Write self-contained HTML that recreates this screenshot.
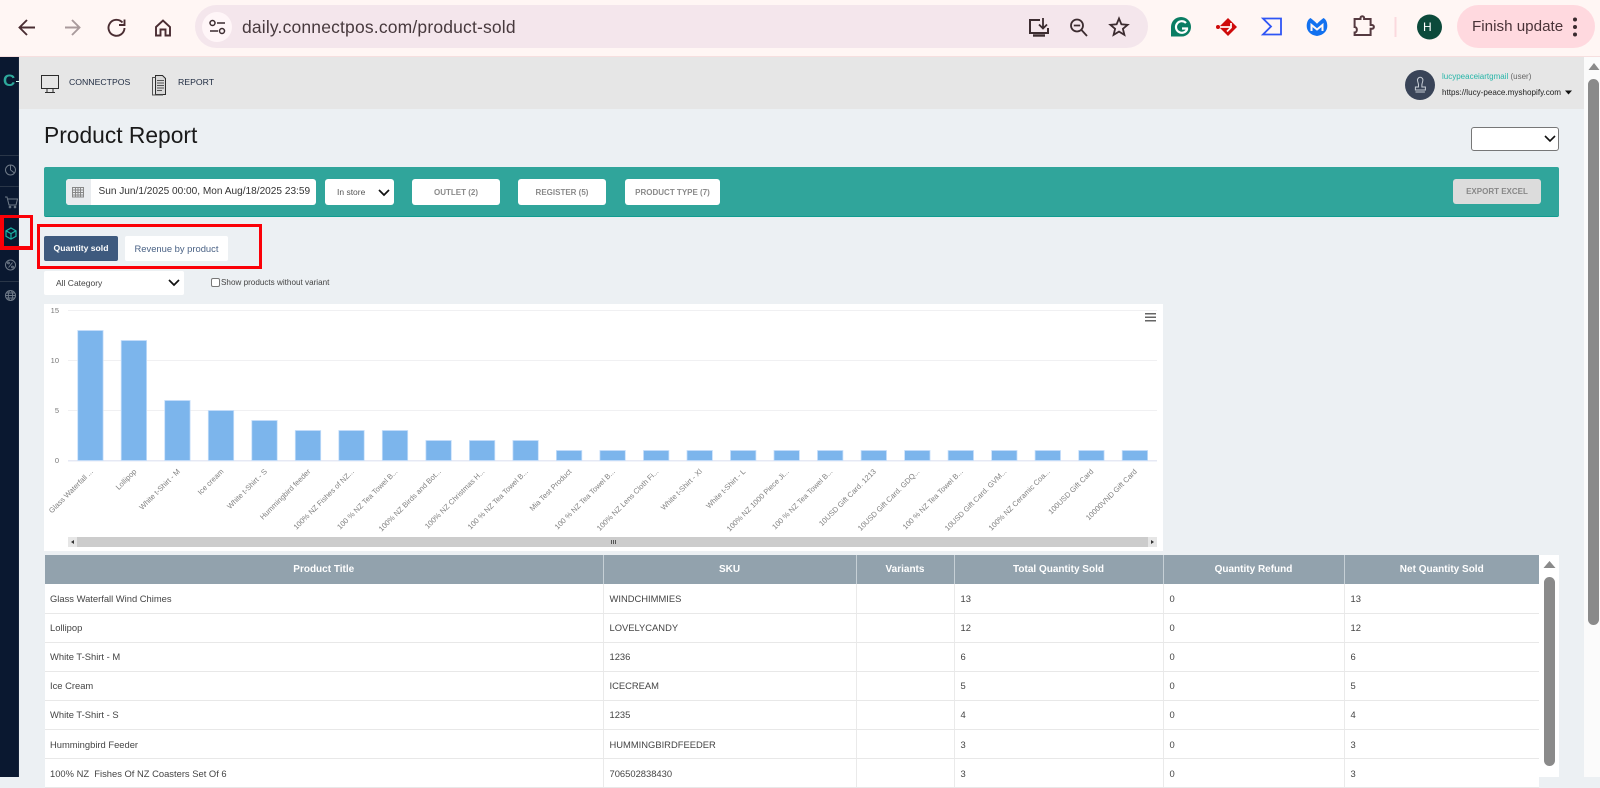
<!DOCTYPE html>
<html><head><meta charset="utf-8"><title>Product Report</title>
<style>
*{box-sizing:border-box}
html,body{margin:0;padding:0;width:1600px;height:777px;overflow:hidden;background:#ecf0f3;font-family:"Liberation Sans",Arial,sans-serif}
.a{position:absolute;white-space:nowrap}
svg.a{overflow:visible}
.btn{position:absolute;top:179px;height:26px;background:#fff;border-radius:3px;color:#8a8a8a;font-size:8px;font-weight:bold;display:flex;align-items:center;justify-content:center}
table{position:absolute;left:45px;top:555px;width:1494px;border-collapse:collapse;table-layout:fixed;background:#fff;font-size:9.4px;color:#444}
th{height:29px;background:#92a2ad;color:#fff;font-size:10px;font-weight:bold;border-right:1px solid #c6d0d6;padding:0}
th:last-child{border-right:0}
td{height:29.1px;padding:0 0 0 6px;border-bottom:1px solid #e8e8e8;border-right:1px solid #eaeaea;white-space:nowrap}
td:first-child{padding-left:5px}
td:last-child{border-right:0}
</style></head><body>

<!-- browser chrome -->
<div class="a" style="left:0;top:0;width:1600px;height:57px;background:#fff6f4;border-bottom:1px solid #f6dfdf"></div>
<svg class="a" style="left:0;top:0" width="1600" height="57" fill="none" stroke="#4a2d32" stroke-width="1.9">
<path d="M35 27.500H20M27 20l-7.500 7.500L27 35"/>
<path d="M80 27.500H65M72 20l7.500 7.500L72 35" stroke="#a99a9c"/>
<path d="M122.500 22.500A8 8 0 1 0 124.500 28M124.500 19.500v5.500h-5.500" />
<path d="M156 27l7-6.500 7 6.500v8.500h-4.500v-6h-5v6H156z"/>
</svg>
<div class="a" style="left:195px;top:5px;width:953px;height:43px;border-radius:22px;background:#f4e6ec"></div>
<div class="a" style="left:202px;top:12px;width:30px;height:30px;border-radius:50%;background:#fff6f8"></div>
<svg class="a" style="left:0;top:0" width="1600" height="57" fill="none" stroke="#3c2c30" stroke-width="1.5">
<circle cx="212.500" cy="23" r="2.500"/><path d="M217 23h8M210 31h8"/><circle cx="222" cy="31" r="2.500"/>
<path d="M1040 20h-10v13h18v-5" stroke-width="2"/><path d="M1033 35.500h12" stroke-width="2.400"/><path d="M1043 18v10M1039 24.500l4 4 4-4" stroke-width="1.800"/>
<circle cx="1077" cy="25.500" r="6" stroke-width="1.800"/><path d="M1073.800 25.500h6.400M1081.500 30l5.500 6" stroke-width="1.800"/>
<path d="M1119 18.500l2.400 5.800 6.200.5-4.700 4 1.500 6.100-5.400-3.300-5.400 3.300 1.500-6.100-4.700-4 6.200-.5z" stroke-width="1.800"/>
</svg>
<div class="a" style="left:242px;top:16px;font-size:17.500px;line-height:22px;color:#47393d;letter-spacing:.17px">daily.connectpos.com/product-sold</div>
<svg class="a" style="left:0;top:0" width="1600" height="57">
<path d="M1181 17a10 10 0 0 1 10 10c0 5.500-4.500 10-10 9.500h-10v-9.500a10 10 0 0 1 10-10z" fill="#0a7d63"/>
<path d="M1186 23a5.800 5.800 0 1 0 1 6.500v-1h-5" fill="none" stroke="#fff" stroke-width="2.200"/>
<path d="M1228 18l9 9-9 9-8-8v-2z" fill="#cf0a0a"/>
<path d="M1220 27h10.500M1231 23v4.500l-4 4" fill="none" stroke="#fff6f4" stroke-width="1.800"/>
<circle cx="1218" cy="27" r="2" fill="#cf0a0a"/>
<path d="M1263 18.500h18v16h-18l8-8z" fill="none" stroke="#2f55f5" stroke-width="1.800"/>
<path d="M1310.500 18c-2.700 1.500-3.800 4.500-3.800 8 0 5.200 4 9.200 10.300 10 6.300-.8 10.300-4.800 10.300-10 0-3.500-1.100-6.500-3.800-8-2 1.500-4.500 3.600-6.500 5.800-2-2.200-4.500-4.300-6.500-5.800z" fill="#1271f0"/>
<path d="M1311.500 31v-6l5.500 4.500 5.500-4.500v6" fill="none" stroke="#fff6f4" stroke-width="2"/>
<path d="M1355 19h5.500v-1a1.800 1.800 0 0 1 3.600 0v1h6.500v6h1.400a1.900 1.900 0 0 1 0 3.800h-1.400V35h-16v-2.500c3 0 3-5.500 0-5.500v-8z" fill="none" stroke="#553a40" stroke-width="2"/>
<rect x="1394.500" y="17" width="2" height="20" fill="#fbd9de"/>
<circle cx="1429.500" cy="27" r="12.500" fill="#0c4a3b"/>
</svg>
<div class="a" style="left:1423px;top:20px;font-size:12px;line-height:14px;color:#fff">H</div>
<div class="a" style="left:1457px;top:5px;width:138px;height:43px;border-radius:22px;background:#ffd9df"></div>
<svg class="a" style="left:1457px;top:5px" width="138" height="43"><circle cx="118" cy="14.500" r="2" fill="#3a2a2e"/><circle cx="118" cy="22" r="2" fill="#3a2a2e"/><circle cx="118" cy="29.500" r="2" fill="#3a2a2e"/></svg>
<div class="a" style="left:1472px;top:17px;font-size:15.200px;line-height:19px;color:#4a3338">Finish update</div>

<!-- sidebar -->
<div class="a" style="left:0;top:57px;width:19px;height:720px;background:#0a1830;border-right:1px solid #16233a"></div>
<div class="a" style="left:3px;top:71px;font-size:17px;line-height:20px;font-weight:bold;color:#2ea99c">C</div>
<div class="a" style="left:16px;top:81px;width:3px;height:1px;background:#cfe"></div>
<div class="a" style="left:0;top:155px;width:19px;height:1px;background:#2a3648"></div>
<div class="a" style="left:0;top:186px;width:19px;height:1px;background:#2a3648"></div>
<div class="a" style="left:0;top:281px;width:19px;height:1px;background:#2a3648"></div>
<svg class="a" style="left:0;top:0" width="20" height="320" fill="none" stroke="#6f7a88" stroke-width="1">
<circle cx="10.500" cy="170" r="5"/><path d="M10.500 170v-5M10.500 170l4 3"/>
<path d="M5 197h2l2 8h7l1.500-6H8"/><circle cx="10" cy="207" r=".8"/><circle cx="15" cy="207" r=".8"/>
<path d="M11 228l5 2.800v5.500l-5 2.800-5-2.800v-5.500zM6 230.800l5 2.800 5-2.800M11 233.600v5.500" stroke="#19b3a5" stroke-width="1.200"/>
<circle cx="10.500" cy="265" r="5"/><path d="M8.500 267.500l4-5"/><circle cx="8.500" cy="263" r=".9"/><circle cx="12.500" cy="267" r=".9"/>
<circle cx="10.500" cy="295.500" r="5"/><ellipse cx="10.500" cy="295.500" rx="2.200" ry="5"/><path d="M5.500 295.500h10M6.300 293h8.400M6.300 298h8.400"/>
</svg>

<!-- header -->
<div class="a" style="left:19px;top:57px;width:1565px;height:52px;background:#e6e6e6"></div>
<svg class="a" style="left:0;top:0" width="240" height="100" fill="none" stroke="#2c2c2c" stroke-width="1">
<rect x="41.500" y="75.500" width="17" height="13"/><path d="M47 89v3M53 89v3M45 92.500h10"/>
<path d="M155.500 75.500h7l3 3v16h-10z" fill="#d8d8d8"/><path d="M155.500 77.500h-3v17.500h10v-.5" stroke="#555"/>
<path d="M157 80.500h7M157 83h7M157 85.500h7M157 88h7M157 90.500h5" stroke="#555"/>
</svg>
<div class="a" style="left:69px;top:77px;font-size:8.700px;line-height:11px;color:#1e2a40">CONNECTPOS</div>
<div class="a" style="left:178px;top:77px;font-size:8.700px;line-height:11px;color:#1e2a40">REPORT</div>
<div class="a" style="left:1405px;top:70px;width:30px;height:30px;border-radius:50%;background:#394458"></div>
<svg class="a" style="left:1405px;top:70px" width="30" height="30" fill="none" stroke="#c8ced6" stroke-width="1"><path d="M13.500 15c0-2-1-3-1-5a2.700 2.700 0 0 1 5.400 0c0 2-1 3-1 5v2h3.500v3h-10v-3h3.100zM10.500 22h9.400"/></svg>
<div class="a" style="left:1442px;top:72px;font-size:8px;line-height:10px;color:#666"><span style="color:#27b5a8">lucypeaceiartgmail</span> (user)</div>
<div class="a" style="left:1442px;top:88px;font-size:8.100px;line-height:10px;color:#222">https://lucy-peace.myshopify.com</div>
<svg class="a" style="left:1564px;top:90px" width="9" height="6"><path d="M1 .5h7L4.500 4.500z" fill="#111"/></svg>

<!-- title -->
<div class="a" style="left:44px;top:121px;font-size:22.800px;line-height:28px;color:#1a1a1a">Product Report</div>
<div class="a" style="left:1471px;top:127px;width:88px;height:24px;background:#fff;border:1px solid #777;border-radius:3px"></div>
<svg class="a" style="left:1544px;top:135px" width="12" height="8" fill="none" stroke="#111" stroke-width="1.600"><path d="M1 1l5 5 5-5"/></svg>

<!-- teal filter bar -->
<div class="a" style="left:44px;top:167px;width:1515px;height:50px;background:#30a59b;border-bottom:1px solid #109c90;border-radius:2px"></div>
<div class="a" style="left:66px;top:179px;width:250px;height:26px;background:#fff;border-radius:3px;overflow:hidden">
  <div style="position:absolute;left:0;top:0;width:25px;height:26px;background:#e9ecef"></div>
</div>
<svg class="a" style="left:72px;top:186px" width="13" height="12" fill="none" stroke="#888" stroke-width="1"><rect x=".5" y="1.500" width="11" height="9.500"/><path d="M.5 4h11M.5 6.500h11M.5 9h11M3.500 1.500V11M6 1.500V11M8.500 1.500V11"/></svg>
<div class="a" style="left:98.500px;top:185px;font-size:10.100px;line-height:14px;color:#333">Sun Jun/1/2025 00:00, Mon Aug/18/2025 23:59</div>
<div class="btn" style="left:325px;width:69px;justify-content:flex-start;padding-left:12px;color:#555;font-weight:normal;font-size:8.500px">In store</div>
<svg class="a" style="left:378px;top:189px" width="13" height="8" fill="none" stroke="#111" stroke-width="1.700"><path d="M1 1l5 5 5-5"/></svg>
<div class="btn" style="left:412px;width:88px">OUTLET (2)</div>
<div class="btn" style="left:518px;width:88px">REGISTER (5)</div>
<div class="btn" style="left:625px;width:95px">PRODUCT TYPE (7)</div>
<div class="btn" style="left:1453px;width:88px;height:25px;background:#dcdcdc;color:#888">EXPORT EXCEL</div>

<!-- tabs -->
<div class="a" style="left:44px;top:236px;width:74px;height:25px;background:#3e5a7e;border-radius:2px;color:#fff;font-size:8.600px;font-weight:bold;line-height:25px;text-align:center">Quantity sold</div>
<div class="a" style="left:125px;top:236px;width:103px;height:25px;background:#fff;border-radius:2px;color:#4a6285;font-size:9.400px;line-height:25px;text-align:center">Revenue by product</div>
<div class="a" style="left:37px;top:224px;width:225px;height:45px;border:3.500px solid #fb0007"></div>
<div class="a" style="left:0;top:215px;width:33px;height:35px;border:solid #fb0007;border-width:3px 3px 4px 4px"></div>

<div class="a" style="left:44px;top:271px;width:140px;height:24px;background:#fff;border-radius:2px;color:#444;font-size:8.500px;line-height:24px;padding-left:12px">All Category</div>
<svg class="a" style="left:168px;top:279px" width="13" height="8" fill="none" stroke="#111" stroke-width="1.700"><path d="M1 1l5 5 5-5"/></svg>
<div class="a" style="left:211px;top:278px;width:9px;height:9px;background:#fff;border:1px solid #777;border-radius:2px"></div>
<div class="a" style="left:221px;top:277px;font-size:8.150px;line-height:11px;color:#444">Show products without variant</div>

<!-- chart -->
<div class="a" style="left:44px;top:304px;width:1119px;height:247px;background:#fff"></div>
<svg class="a" style="left:0;top:0" width="1600" height="777" font-family="Liberation Sans, Arial, sans-serif">
<g fill="#f0f0f2"><rect x="68" y="310" width="1089" height="1"/><rect x="68" y="360" width="1089" height="1"/><rect x="68" y="410" width="1089" height="1"/></g>
<rect x="68" y="460" width="1089" height="1.500" fill="#e6e9f4"/>
<g fill="#777" font-size="7.500" text-anchor="end"><text x="59" y="313">15</text><text x="59" y="363">10</text><text x="59" y="413">5</text><text x="59" y="463">0</text></g>
<g fill="#666"><rect x="1145" y="313" width="11" height="1.500"/><rect x="1145" y="316.500" width="11" height="1.500"/><rect x="1145" y="320" width="11" height="1.500"/></g>
<g fill="#7cb5ec" stroke="#c5defa" stroke-width=".8">
<rect x="77.700" y="330.500" width="25.400" height="130"/>
<rect x="121.200" y="340.500" width="25.400" height="120"/>
<rect x="164.700" y="400.500" width="25.400" height="60"/>
<rect x="208.300" y="410.500" width="25.400" height="50"/>
<rect x="251.800" y="420.500" width="25.400" height="40"/>
<rect x="295.300" y="430.500" width="25.400" height="30"/>
<rect x="338.800" y="430.500" width="25.400" height="30"/>
<rect x="382.300" y="430.500" width="25.400" height="30"/>
<rect x="425.900" y="440.500" width="25.400" height="20"/>
<rect x="469.400" y="440.500" width="25.400" height="20"/>
<rect x="512.900" y="440.500" width="25.400" height="20"/>
<rect x="556.400" y="450.500" width="25.400" height="10"/>
<rect x="599.900" y="450.500" width="25.400" height="10"/>
<rect x="643.500" y="450.500" width="25.400" height="10"/>
<rect x="687" y="450.500" width="25.400" height="10"/>
<rect x="730.500" y="450.500" width="25.400" height="10"/>
<rect x="774" y="450.500" width="25.400" height="10"/>
<rect x="817.500" y="450.500" width="25.400" height="10"/>
<rect x="861.100" y="450.500" width="25.400" height="10"/>
<rect x="904.600" y="450.500" width="25.400" height="10"/>
<rect x="948.100" y="450.500" width="25.400" height="10"/>
<rect x="991.600" y="450.500" width="25.400" height="10"/>
<rect x="1035.100" y="450.500" width="25.400" height="10"/>
<rect x="1078.700" y="450.500" width="25.400" height="10"/>
<rect x="1122.200" y="450.500" width="25.400" height="10"/>
</g>
<g fill="#808080" font-size="7.500" text-anchor="end">
<text transform="translate(93.500 472) rotate(-45)">Glass Waterfall ...</text>
<text transform="translate(137 472) rotate(-45)">Lollipop</text>
<text transform="translate(180.500 472) rotate(-45)">White t-Shirt - M</text>
<text transform="translate(224 472) rotate(-45)">Ice cream</text>
<text transform="translate(267.500 472) rotate(-45)">White t-Shirt - S</text>
<text transform="translate(311 472) rotate(-45)">Hummingbird feeder</text>
<text transform="translate(354.500 472) rotate(-45)">100% NZ Fishes of NZ...</text>
<text transform="translate(398 472) rotate(-45)">100 % NZ Tea Towel B...</text>
<text transform="translate(441.500 472) rotate(-45)">100% NZ Birds and Bot...</text>
<text transform="translate(485 472) rotate(-45)">100% NZ Christmas H...</text>
<text transform="translate(528.500 472) rotate(-45)">100 % NZ Tea Towel B...</text>
<text transform="translate(572 472) rotate(-45)">Mia Test Product</text>
<text transform="translate(615.500 472) rotate(-45)">100 % NZ Tea Towel B...</text>
<text transform="translate(659 472) rotate(-45)">100% NZ Lens Cloth Fi...</text>
<text transform="translate(702.500 472) rotate(-45)">White t-Shirt - Xl</text>
<text transform="translate(746 472) rotate(-45)">White t-Shirt - L</text>
<text transform="translate(789.500 472) rotate(-45)">100% NZ 1000 Piece Ji...</text>
<text transform="translate(833 472) rotate(-45)">100 % NZ Tea Towel B...</text>
<text transform="translate(876.500 472) rotate(-45)">10USD Gift Card. 1213</text>
<text transform="translate(920 472) rotate(-45)">10USD Gift Card. GDQ...</text>
<text transform="translate(963.500 472) rotate(-45)">100 % NZ Tea Towel B...</text>
<text transform="translate(1007 472) rotate(-45)">10USD Gift Card. GVM...</text>
<text transform="translate(1050.500 472) rotate(-45)">100% NZ Ceramic Coa...</text>
<text transform="translate(1094 472) rotate(-45)">100USD Gift Card</text>
<text transform="translate(1137.500 472) rotate(-45)">10000VND Gift Card</text>
</g>
<rect x="68" y="537" width="1089" height="10" fill="#cccccc"/>
<rect x="68" y="537" width="9" height="10" fill="#e6e6e6"/><rect x="1148" y="537" width="9" height="10" fill="#e6e6e6"/>
<path d="M74 540l-3 2 3 2z" fill="#333"/><path d="M1151 540l3 2-3 2z" fill="#333"/>
<g fill="#555"><rect x="611" y="540" width="1" height="4"/><rect x="613" y="540" width="1" height="4"/><rect x="615" y="540" width="1" height="4"/></g>
</svg>

<!-- table -->
<div class="a" style="left:1539px;top:555px;width:20px;height:222px;background:#fff"></div>
<table>
<colgroup><col style="width:558px"><col style="width:253px"><col style="width:98px"><col style="width:209px"><col style="width:181px"><col style="width:195px"></colgroup>
<tr><th>Product Title</th><th>SKU</th><th>Variants</th><th>Total Quantity Sold</th><th>Quantity Refund</th><th>Net Quantity Sold</th></tr>
<tr><td>Glass Waterfall Wind Chimes</td><td>WINDCHIMMIES</td><td></td><td>13</td><td>0</td><td>13</td></tr>
<tr><td>Lollipop</td><td>LOVELYCANDY</td><td></td><td>12</td><td>0</td><td>12</td></tr>
<tr><td>White T-Shirt - M</td><td>1236</td><td></td><td>6</td><td>0</td><td>6</td></tr>
<tr><td>Ice Cream</td><td>ICECREAM</td><td></td><td>5</td><td>0</td><td>5</td></tr>
<tr><td>White T-Shirt - S</td><td>1235</td><td></td><td>4</td><td>0</td><td>4</td></tr>
<tr><td>Hummingbird Feeder</td><td>HUMMINGBIRDFEEDER</td><td></td><td>3</td><td>0</td><td>3</td></tr>
<tr><td>100% NZ&nbsp; Fishes Of NZ Coasters Set Of 6</td><td>706502838430</td><td></td><td>3</td><td>0</td><td>3</td></tr>
</table>
<svg class="a" style="left:1543px;top:560px" width="13" height="9"><path d="M6.500 1l6 7H.5z" fill="#8a8a8a"/></svg>
<div class="a" style="left:1544px;top:577px;width:11px;height:189px;border-radius:6px;background:#8a8a8a"></div>

<!-- page scrollbar -->
<div class="a" style="left:1584px;top:57px;width:16px;height:720px;background:#fbfbfb"></div>
<svg class="a" style="left:1588px;top:62px" width="12" height="9"><path d="M6 1l5.500 7H.5z" fill="#8a8a8a"/></svg>
<div class="a" style="left:1588px;top:79px;width:11px;height:546px;border-radius:6px;background:#8a8a8a"></div>

</body></html>
